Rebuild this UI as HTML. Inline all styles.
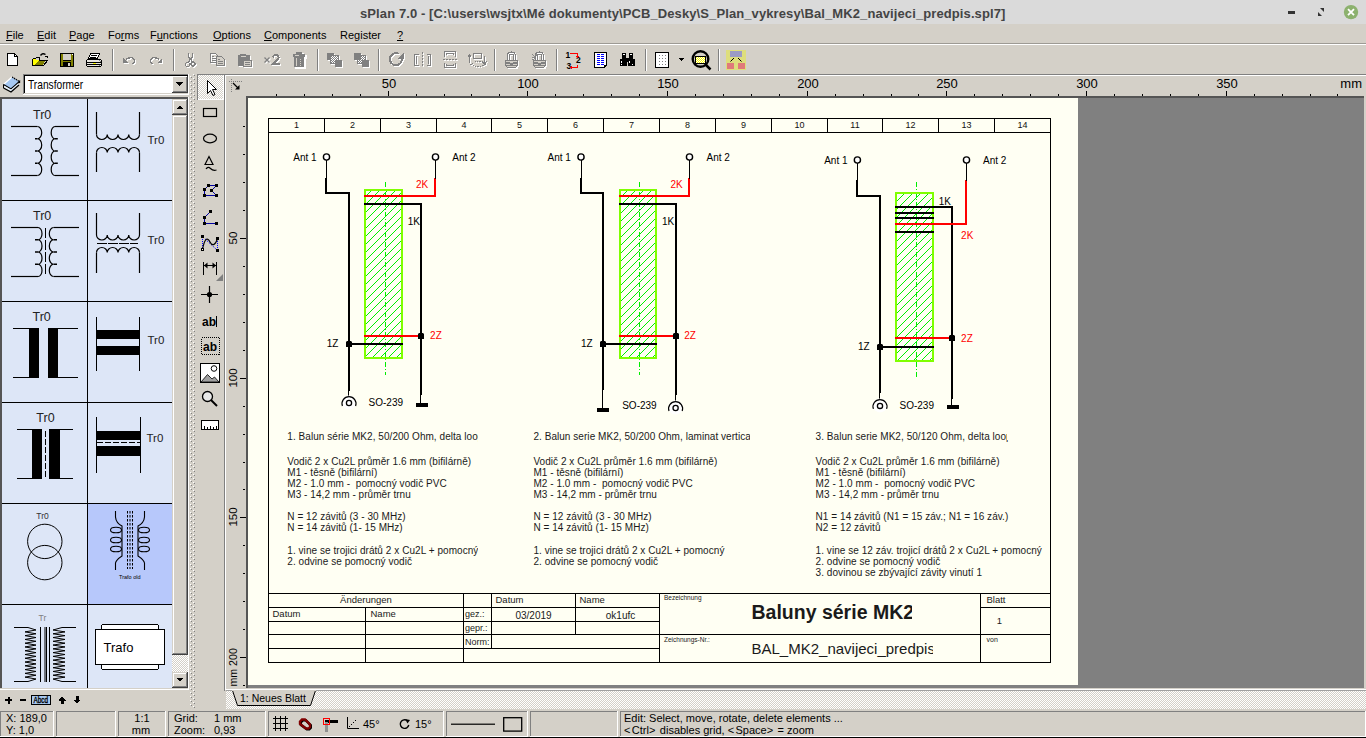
<!DOCTYPE html>
<html><head><meta charset="utf-8">
<style>
*{margin:0;padding:0;box-sizing:border-box}
html,body{width:1366px;height:738px;overflow:hidden;background:#d4d0c8;font-family:"Liberation Sans",sans-serif;position:relative}
.a{position:absolute}
#title{left:0;top:0;width:1366px;height:24px;background:#dadada}
#title .t{left:360px;top:5.5px;font-size:13px;font-weight:bold;color:#444;letter-spacing:0.1px;white-space:pre}
#menu{left:0;top:24px;width:1366px;height:20px;background:#d4d0c8;border-bottom:1px solid #9d9a94}
#menu span{position:absolute;top:5px;font-size:11px;color:#000;white-space:pre}
#menu u{text-decoration:underline;text-underline-offset:1px;text-decoration-thickness:1px}
svg text{white-space:pre}
.dither{background-color:#fff;background-image:linear-gradient(45deg,#d4d0c8 25%,transparent 25%,transparent 75%,#d4d0c8 75%),linear-gradient(45deg,#d4d0c8 25%,transparent 25%,transparent 75%,#d4d0c8 75%);background-size:2px 2px;background-position:0 0,1px 1px}
.sunk{border-top:1px solid #808080;border-left:1px solid #808080;border-bottom:1px solid #fff;border-right:1px solid #fff}
.raised{border-top:1px solid #fff;border-left:1px solid #fff;border-bottom:1px solid #404040;border-right:1px solid #404040;background:#d4d0c8}
</style></head>
<body>
<div id="title" class="a"><div class="t a">sPlan 7.0 - [C:\users\wsjtx\Mé dokumenty\PCB_Desky\S_Plan_vykresy\Bal_MK2_navijeci_predpis.spl7]</div>
<div class="a" style="left:1288px;top:11px;width:7px;height:3px;background:#333"></div>
<svg class="a" style="left:1316px;top:7px" width="10" height="10"><path d="M2 5V9H6Z M4 1H8V5Z" fill="#333"/></svg>
<svg class="a" style="left:1342px;top:4px" width="18" height="18"><circle cx="9" cy="8.1" r="7.2" fill="#8cb16e"/><path d="M6 5.1L12 11.1M12 5.1L6 11.1" stroke="#fff" stroke-width="1.8"/></svg>
</div>
<div id="menu" class="a">
<span style="left:6px"><u>F</u>ile</span>
<span style="left:37px"><u>E</u>dit</span>
<span style="left:69px"><u>P</u>age</span>
<span style="left:108px">Fo<u>r</u>ms</span>
<span style="left:150px">F<u>u</u>nctions</span>
<span style="left:213px"><u>O</u>ptions</span>
<span style="left:264px"><u>C</u>omponents</span>
<span style="left:340px">Re<u>g</u>ister</span>
<span style="left:397px"><u>?</u></span>
</div>
<div class="a" style="left:0;top:44px;width:1366px;height:1px;background:#fff"></div>
<!-- canvas frame -->
<div class="a" style="left:224px;top:74px;width:1142px;height:617px;border-left:1px solid #808080;border-top:1px solid #808080;background:#d4d0c8">
  <div class="a" style="left:0;top:0;width:1141px;height:615px;border-left:1px solid #fff;border-top:1px solid #fff;border-bottom:1px solid #fff"></div>
</div>
<div class="a" style="left:246px;top:96px;width:1118px;height:592px;background:#808080"></div>
<div class="a" style="left:246px;top:96px;width:2px;height:592px;background:#555"></div>
<div class="a" style="left:246px;top:96px;width:1118px;height:2px;background:#555"></div>
<div class="a" style="left:248px;top:98px;width:830px;height:587px;background:#fffff3"></div>
<svg class="a" style="left:0;top:0" width="1366" height="738" viewBox="0 0 1366 738" font-family="Liberation Sans, sans-serif"><defs><clipPath id="cb1"><rect x="280" y="420" width="198" height="170"/></clipPath><clipPath id="cb2"><rect x="525" y="420" width="225" height="170"/></clipPath><clipPath id="cb3"><rect x="810" y="420" width="197" height="20"/><rect x="810" y="440" width="240" height="150"/></clipPath><clipPath id="ct1"><rect x="660" y="594" width="252" height="40"/></clipPath><clipPath id="ct2"><rect x="660" y="635" width="273" height="27"/></clipPath></defs><g fill="none" stroke="#000" stroke-width="1" shape-rendering="crispEdges"><rect x="268.5" y="118.5" width="782" height="544"/><line x1="268" y1="132.5" x2="1051" y2="132.5"/><line x1="324.5" y1="118" x2="324.5" y2="133"/><line x1="380.5" y1="118" x2="380.5" y2="133"/><line x1="436.5" y1="118" x2="436.5" y2="133"/><line x1="491.5" y1="118" x2="491.5" y2="133"/><line x1="547.5" y1="118" x2="547.5" y2="133"/><line x1="603.5" y1="118" x2="603.5" y2="133"/><line x1="659.5" y1="118" x2="659.5" y2="133"/><line x1="715.5" y1="118" x2="715.5" y2="133"/><line x1="771.5" y1="118" x2="771.5" y2="133"/><line x1="827.5" y1="118" x2="827.5" y2="133"/><line x1="882.5" y1="118" x2="882.5" y2="133"/><line x1="938.5" y1="118" x2="938.5" y2="133"/><line x1="994.5" y1="118" x2="994.5" y2="133"/></g><text x="296.5" y="128" font-size="9" fill="#111" text-anchor="middle" font-weight="normal" >1</text><text x="352.5" y="128" font-size="9" fill="#111" text-anchor="middle" font-weight="normal" >2</text><text x="408.5" y="128" font-size="9" fill="#111" text-anchor="middle" font-weight="normal" >3</text><text x="464.0" y="128" font-size="9" fill="#111" text-anchor="middle" font-weight="normal" >4</text><text x="519.5" y="128" font-size="9" fill="#111" text-anchor="middle" font-weight="normal" >5</text><text x="575.5" y="128" font-size="9" fill="#111" text-anchor="middle" font-weight="normal" >6</text><text x="631.5" y="128" font-size="9" fill="#111" text-anchor="middle" font-weight="normal" >7</text><text x="687.5" y="128" font-size="9" fill="#111" text-anchor="middle" font-weight="normal" >8</text><text x="743.5" y="128" font-size="9" fill="#111" text-anchor="middle" font-weight="normal" >9</text><text x="799.5" y="128" font-size="9" fill="#111" text-anchor="middle" font-weight="normal" >10</text><text x="855.0" y="128" font-size="9" fill="#111" text-anchor="middle" font-weight="normal" >11</text><text x="910.5" y="128" font-size="9" fill="#111" text-anchor="middle" font-weight="normal" >12</text><text x="966.5" y="128" font-size="9" fill="#111" text-anchor="middle" font-weight="normal" >13</text><text x="1022.5" y="128" font-size="9" fill="#111" text-anchor="middle" font-weight="normal" >14</text><g fill="none" stroke="#000" stroke-width="1" shape-rendering="crispEdges"><line x1="268" y1="593.5" x2="1051" y2="593.5"/><line x1="268" y1="607.5" x2="660" y2="607.5"/><line x1="268" y1="621.5" x2="660" y2="621.5"/><line x1="268" y1="634.5" x2="1051" y2="634.5"/><line x1="268" y1="648.5" x2="660" y2="648.5"/><line x1="980" y1="607.5" x2="1051" y2="607.5"/><line x1="365.5" y1="607" x2="365.5" y2="663"/><line x1="463.5" y1="593" x2="463.5" y2="663"/><line x1="491.5" y1="593" x2="491.5" y2="649"/><line x1="575.5" y1="593" x2="575.5" y2="635"/><line x1="659.5" y1="593" x2="659.5" y2="663"/><line x1="980.5" y1="593" x2="980.5" y2="663"/></g><text x="366" y="603" font-size="9.5" fill="#1a1a1a" text-anchor="middle" font-weight="normal" >Änderungen</text><text x="272.5" y="617" font-size="9.5" fill="#1a1a1a" text-anchor="start" font-weight="normal" >Datum</text><text x="370.5" y="617" font-size="9.5" fill="#1a1a1a" text-anchor="start" font-weight="normal" >Name</text><text x="465" y="617" font-size="9" fill="#1a1a1a" text-anchor="start" font-weight="normal" >gez.:</text><text x="465" y="631" font-size="9" fill="#1a1a1a" text-anchor="start" font-weight="normal" >gepr.:</text><text x="465" y="645" font-size="9" fill="#1a1a1a" text-anchor="start" font-weight="normal" >Norm:</text><text x="495.5" y="603" font-size="9.5" fill="#1a1a1a" text-anchor="start" font-weight="normal" >Datum</text><text x="579.5" y="603" font-size="9.5" fill="#1a1a1a" text-anchor="start" font-weight="normal" >Name</text><text x="533.5" y="619" font-size="10" fill="#1a1a1a" text-anchor="middle" font-weight="normal" >03/2019</text><text x="620.5" y="619" font-size="10" fill="#1a1a1a" text-anchor="middle" font-weight="normal" >ok1ufc</text><text x="664" y="600" font-size="6.5" fill="#1a1a1a" text-anchor="start" font-weight="normal" >Bezeichnung</text><text x="664" y="641.5" font-size="6.5" fill="#1a1a1a" text-anchor="start" font-weight="normal" >Zeichnungs-Nr.:</text><g clip-path="url(#ct1)"><text x="751.5" y="619" font-size="19.5" fill="#1a1a1a" text-anchor="start" font-weight="bold" >Baluny série MK2</text></g><g clip-path="url(#ct2)"><text x="751.5" y="653.5" font-size="15" fill="#1a1a1a" text-anchor="start" font-weight="normal" >BAL_MK2_navijeci_predpis</text></g><text x="986.5" y="603" font-size="9.5" fill="#1a1a1a" text-anchor="start" font-weight="normal" >Blatt</text><text x="999.5" y="624" font-size="9.5" fill="#1a1a1a" text-anchor="middle" font-weight="normal" >1</text><text x="986.5" y="641.5" font-size="7" fill="#1a1a1a" text-anchor="start" font-weight="normal" >von</text><g clip-path="url(#cb1)" letter-spacing="0.05"><text x="287.3" y="440" font-size="10" fill="#1a1a1a" text-anchor="start" font-weight="normal" >1. Balun série MK2, 50/200 Ohm, delta loop</text><text x="287.3" y="465.1" font-size="10" fill="#1a1a1a" text-anchor="start" font-weight="normal" >Vodič 2 x Cu2L průměr 1.6 mm (bifilárně)</text><text x="287.3" y="476.15" font-size="10" fill="#1a1a1a" text-anchor="start" font-weight="normal" >M1 - těsně (bifilární)</text><text x="287.3" y="487.2" font-size="10" fill="#1a1a1a" text-anchor="start" font-weight="normal" >M2 - 1.0 mm -  pomocný vodič PVC</text><text x="287.3" y="498.25" font-size="10" fill="#1a1a1a" text-anchor="start" font-weight="normal" >M3 - 14,2 mm - průměr trnu</text><text x="287.3" y="520.35" font-size="10" fill="#1a1a1a" text-anchor="start" font-weight="normal" >N = 12 závitů (3 - 30 MHz)</text><text x="287.3" y="531.4" font-size="10" fill="#1a1a1a" text-anchor="start" font-weight="normal" >N = 14 závitů (1- 15 MHz)</text><text x="287.3" y="553.5" font-size="10" fill="#1a1a1a" text-anchor="start" font-weight="normal" >1. vine se trojici drátů 2 x Cu2L + pomocný</text><text x="287.3" y="564.55" font-size="10" fill="#1a1a1a" text-anchor="start" font-weight="normal" >2. odvine se pomocný vodič</text></g><g clip-path="url(#cb2)" letter-spacing="0.05"><text x="533.4" y="440" font-size="10" fill="#1a1a1a" text-anchor="start" font-weight="normal" >2. Balun serie MK2, 50/200 Ohm, laminat vertica</text><text x="533.4" y="465.1" font-size="10" fill="#1a1a1a" text-anchor="start" font-weight="normal" >Vodič 2 x Cu2L průměr 1.6 mm (bifilárně)</text><text x="533.4" y="476.15" font-size="10" fill="#1a1a1a" text-anchor="start" font-weight="normal" >M1 - těsně (bifilární)</text><text x="533.4" y="487.2" font-size="10" fill="#1a1a1a" text-anchor="start" font-weight="normal" >M2 - 1.0 mm -  pomocný vodič PVC</text><text x="533.4" y="498.25" font-size="10" fill="#1a1a1a" text-anchor="start" font-weight="normal" >M3 - 14,2 mm - průměr trnu</text><text x="533.4" y="520.35" font-size="10" fill="#1a1a1a" text-anchor="start" font-weight="normal" >N = 12 závitů (3 - 30 MHz)</text><text x="533.4" y="531.4" font-size="10" fill="#1a1a1a" text-anchor="start" font-weight="normal" >N = 14 závitů (1- 15 MHz)</text><text x="533.4" y="553.5" font-size="10" fill="#1a1a1a" text-anchor="start" font-weight="normal" >1. vine se trojici drátů 2 x Cu2L + pomocný</text><text x="533.4" y="564.55" font-size="10" fill="#1a1a1a" text-anchor="start" font-weight="normal" >2. odvine se pomocný vodič</text></g><g clip-path="url(#cb3)" letter-spacing="0.05"><text x="815.6" y="440" font-size="10" fill="#1a1a1a" text-anchor="start" font-weight="normal" >3. Balun serie MK2, 50/120 Ohm, delta loop</text><text x="815.6" y="465.1" font-size="10" fill="#1a1a1a" text-anchor="start" font-weight="normal" >Vodič 2 x Cu2L průměr 1.6 mm (bifilárně)</text><text x="815.6" y="476.15" font-size="10" fill="#1a1a1a" text-anchor="start" font-weight="normal" >M1 - těsně (bifilární)</text><text x="815.6" y="487.2" font-size="10" fill="#1a1a1a" text-anchor="start" font-weight="normal" >M2 - 1.0 mm -  pomocný vodič PVC</text><text x="815.6" y="498.25" font-size="10" fill="#1a1a1a" text-anchor="start" font-weight="normal" >M3 - 14,2 mm - průměr trnu</text><text x="815.6" y="520.35" font-size="10" fill="#1a1a1a" text-anchor="start" font-weight="normal" >N1 = 14 závitů (N1 = 15 záv.; N1 = 16 záv.)</text><text x="815.6" y="531.4" font-size="10" fill="#1a1a1a" text-anchor="start" font-weight="normal" >N2 = 12 závitů</text><text x="815.6" y="553.5" font-size="10" fill="#1a1a1a" text-anchor="start" font-weight="normal" >1. vine se 12 záv. trojicí drátů 2 x Cu2L + pomocný</text><text x="815.6" y="564.55" font-size="10" fill="#1a1a1a" text-anchor="start" font-weight="normal" >2. odvine se pomocný vodič</text><text x="815.6" y="575.6" font-size="10" fill="#1a1a1a" text-anchor="start" font-weight="normal" >3. dovinou se zbývající závity vinutí 1</text></g><path d="M366 196L371 191M366 204L379 191M366 212L387 191M366 220L395 191M366 228L401 193M366 236L401 201M366 244L401 209M366 252L401 217M366 260L401 225M366 268L401 233M366 276L401 241M366 284L401 249M366 292L401 257M366 300L401 265M366 308L401 273M366 316L401 281M366 324L401 289M366 332L401 297M366 340L401 305M366 348L401 313M366 356L401 321M373 357L401 329M381 357L401 337M389 357L401 345M397 357L401 353" stroke="#00ee00" stroke-width="1" fill="none" shape-rendering="crispEdges"/><line x1="385.5" y1="182" x2="385.5" y2="375" stroke="#00ee00" stroke-width="1" stroke-dasharray="5,2,1,2" shape-rendering="crispEdges"/><rect x="365" y="190" width="37" height="168" fill="none" stroke="#80ff00" stroke-width="2" shape-rendering="crispEdges"/><g fill="none" stroke-width="2" shape-rendering="crispEdges" stroke-linecap="square"><path d="M326 179V193H349V390" stroke="#000"/><path d="M365 204H421V394" stroke="#000"/><path d="M365 196H435V179" stroke="#ff0000"/><path d="M365 336H421" stroke="#ff0000"/><path d="M349 344H402" stroke="#000"/></g><g fill="none" stroke-width="1" stroke="#000" shape-rendering="crispEdges"><path d="M326.5 160V179"/><path d="M435.5 160V179"/><path d="M348.5 390V396"/><path d="M420.5 394V403"/></g><path d="M347 341H351L352 342V347H346V342Z" fill="#000"/><path d="M419 333H423L424 334V339H418V334Z" fill="#000"/><circle cx="326.5" cy="157" r="3.1" fill="#fff" stroke="#000" stroke-width="1.4"/><circle cx="435.5" cy="157" r="3.1" fill="#fff" stroke="#000" stroke-width="1.4"/><rect x="416" y="403" width="12" height="4" fill="#000"/><circle cx="349" cy="402.5" r="7" fill="#fff" stroke="none"/><path d="M342.4 406.0A7 7 0 1 1 355.6 406.0" fill="none" stroke="#000" stroke-width="1.2"/><circle cx="349" cy="403.0" r="2.6" fill="none" stroke="#000" stroke-width="1.3"/><text x="293.3" y="160.5" font-size="10" fill="#000" text-anchor="start" font-weight="normal" >Ant 1</text><text x="452.3" y="160.5" font-size="10" fill="#000" text-anchor="start" font-weight="normal" >Ant 2</text><text x="416" y="188" font-size="10" fill="#ff0000" text-anchor="start" font-weight="normal" >2K</text><text x="407.8" y="225" font-size="10" fill="#000" text-anchor="start" font-weight="normal" >1K</text><text x="326.8" y="347.2" font-size="10" fill="#000" text-anchor="start" font-weight="normal" >1Z</text><text x="430.1" y="339" font-size="10" fill="#ff0000" text-anchor="start" font-weight="normal" >2Z</text><text x="368.6" y="406.2" font-size="10" fill="#000" text-anchor="start" font-weight="normal" >SO-239</text><path d="M621 197L627 191M621 205L635 191M621 213L643 191M621 221L651 191M621 229L655 195M621 237L655 203M621 245L655 211M621 253L655 219M621 261L655 227M621 269L655 235M621 277L655 243M621 285L655 251M621 293L655 259M621 301L655 267M621 309L655 275M621 317L655 283M621 325L655 291M621 333L655 299M621 341L655 307M621 349L655 315M621 357L655 323M629 357L655 331M637 357L655 339M645 357L655 347M653 357L655 355" stroke="#00ee00" stroke-width="1" fill="none" shape-rendering="crispEdges"/><line x1="639.5" y1="182" x2="639.5" y2="375" stroke="#00ee00" stroke-width="1" stroke-dasharray="5,2,1,2" shape-rendering="crispEdges"/><rect x="620" y="190" width="36" height="168" fill="none" stroke="#80ff00" stroke-width="2" shape-rendering="crispEdges"/><g fill="none" stroke-width="2" shape-rendering="crispEdges" stroke-linecap="square"><path d="M581 179V193H603V389" stroke="#000"/><path d="M620 204H676V394" stroke="#000"/><path d="M620 196H689V179" stroke="#ff0000"/><path d="M620 336H676" stroke="#ff0000"/><path d="M603 344H656" stroke="#000"/></g><g fill="none" stroke-width="1" stroke="#000" shape-rendering="crispEdges"><path d="M581.5 160V179"/><path d="M689.5 160V179"/><path d="M602.5 389V408"/><path d="M675.5 394V401"/></g><path d="M601 341H605L606 342V347H600V342Z" fill="#000"/><path d="M674 333H678L679 334V339H673V334Z" fill="#000"/><circle cx="581" cy="157" r="3.1" fill="#fff" stroke="#000" stroke-width="1.4"/><circle cx="689.5" cy="157" r="3.1" fill="#fff" stroke="#000" stroke-width="1.4"/><rect x="597" y="408" width="12" height="4" fill="#000"/><circle cx="675.6" cy="407.5" r="7" fill="#fff" stroke="none"/><path d="M669.0 411.0A7 7 0 1 1 682.2 411.0" fill="none" stroke="#000" stroke-width="1.2"/><circle cx="675.6" cy="408.0" r="2.6" fill="none" stroke="#000" stroke-width="1.3"/><text x="547.5" y="160.5" font-size="10" fill="#000" text-anchor="start" font-weight="normal" >Ant 1</text><text x="706.5" y="160.5" font-size="10" fill="#000" text-anchor="start" font-weight="normal" >Ant 2</text><text x="670.4" y="188" font-size="10" fill="#ff0000" text-anchor="start" font-weight="normal" >2K</text><text x="662" y="225" font-size="10" fill="#000" text-anchor="start" font-weight="normal" >1K</text><text x="581" y="347.2" font-size="10" fill="#000" text-anchor="start" font-weight="normal" >1Z</text><text x="684.3" y="339" font-size="10" fill="#ff0000" text-anchor="start" font-weight="normal" >2Z</text><text x="622.2" y="409" font-size="10" fill="#000" text-anchor="start" font-weight="normal" >SO-239</text><path d="M897 201L904 194M897 209L912 194M897 217L920 194M897 225L928 194M897 233L932 198M897 241L932 206M897 249L932 214M897 257L932 222M897 265L932 230M897 273L932 238M897 281L932 246M897 289L932 254M897 297L932 262M897 305L932 270M897 313L932 278M897 321L932 286M897 329L932 294M897 337L932 302M897 345L932 310M897 353L932 318M898 360L932 326M906 360L932 334M914 360L932 342M922 360L932 350M930 360L932 358" stroke="#00ee00" stroke-width="1" fill="none" shape-rendering="crispEdges"/><line x1="916.5" y1="182" x2="916.5" y2="377" stroke="#00ee00" stroke-width="1" stroke-dasharray="5,2,1,2" shape-rendering="crispEdges"/><rect x="896" y="193" width="37" height="168" fill="none" stroke="#80ff00" stroke-width="2" shape-rendering="crispEdges"/><g fill="none" stroke-width="2" shape-rendering="crispEdges" stroke-linecap="square"><path d="M857 181V196H880V392" stroke="#000"/><path d="M896 207H952V398" stroke="#000"/><path d="M896 213H933" stroke="#000"/><path d="M896 218H933" stroke="#000"/><path d="M896 232H933" stroke="#000"/><path d="M896 224H966V181" stroke="#ff0000"/><path d="M896 338H952" stroke="#ff0000"/><path d="M880 347H933" stroke="#000"/></g><g fill="none" stroke-width="1" stroke="#000" shape-rendering="crispEdges"><path d="M857.5 163V181"/><path d="M966.5 163V181"/><path d="M879.5 392V399"/><path d="M951.5 398V405"/></g><path d="M878 344H882L883 345V350H877V345Z" fill="#000"/><path d="M950 335H954L955 336V341H949V336Z" fill="#000"/><circle cx="857.4" cy="160" r="3.1" fill="#fff" stroke="#000" stroke-width="1.4"/><circle cx="966.5" cy="160" r="3.1" fill="#fff" stroke="#000" stroke-width="1.4"/><rect x="947" y="405" width="12" height="4" fill="#000"/><circle cx="880" cy="405.4" r="7" fill="#fff" stroke="none"/><path d="M873.4 408.9A7 7 0 1 1 886.6 408.9" fill="none" stroke="#000" stroke-width="1.2"/><circle cx="880" cy="405.9" r="2.6" fill="none" stroke="#000" stroke-width="1.3"/><text x="824.2" y="163.5" font-size="10" fill="#000" text-anchor="start" font-weight="normal" >Ant 1</text><text x="983" y="163.5" font-size="10" fill="#000" text-anchor="start" font-weight="normal" >Ant 2</text><text x="961.1" y="239" font-size="10" fill="#ff0000" text-anchor="start" font-weight="normal" >2K</text><text x="938.8" y="205" font-size="10" fill="#000" text-anchor="start" font-weight="normal" >1K</text><text x="857.9" y="350" font-size="10" fill="#000" text-anchor="start" font-weight="normal" >1Z</text><text x="961.1" y="342" font-size="10" fill="#ff0000" text-anchor="start" font-weight="normal" >2Z</text><text x="899.5" y="409" font-size="10" fill="#000" text-anchor="start" font-weight="normal" >SO-239</text></svg><svg class="a" style="left:0;top:0" width="760" height="74" viewBox="0 0 760 74" shape-rendering="crispEdges"><path d="M7.5 53.5H14.5L17.5 56.5V65.5H7.5Z" fill="#fff" stroke="#000"/><path d="M14.5 53.5V56.5H17.5" fill="none" stroke="#000"/><path d="M32.5 58.5H35.5L36.5 57.5H39.5V60.5H44.5V61.5" fill="none" stroke="#000"/><path d="M32.5 58.5V65.5H43.5L47.5 60.5H38.5L33.5 65.5" fill="none" stroke="#000"/><path d="M33 59H36V60H38V60H39V61L34 65H33Z" fill="#ffff00"/><path d="M35 64L38.5 61H45.5L42.5 65H35Z" fill="#808000"/><path d="M40.5 55.5Q42.5 52.5 45.5 54.5" fill="none" stroke="#000" stroke-width="1.4" shape-rendering="auto"/><path d="M44 55.5H47.5V58Z" fill="#000"/><rect x="60" y="53" width="14" height="14" fill="#000"/><rect x="61" y="54" width="12" height="12" fill="#808000"/><rect x="63" y="54" width="8" height="6" fill="#d4d0c8"/><rect x="63" y="60" width="8" height="1" fill="#000"/><rect x="63" y="62" width="8" height="5" fill="#000"/><rect x="68" y="63" width="2" height="3" fill="#d4d0c8"/><rect x="72" y="54" width="1" height="1" fill="#fff"/><path d="M90.5 53.5H99.5L97.5 58.5H88.5Z" fill="#fff" stroke="#000"/><rect x="91" y="55" width="6" height="1" fill="#000"/><rect x="90" y="57" width="6" height="1" fill="#000"/><path d="M87.5 59.5H100.5L101.5 60.5V65.5L100.5 66.5H87.5L86.5 65.5V60.5Z" fill="#e8e6e0" stroke="#000"/><rect x="87" y="62" width="14" height="1" fill="#000"/><rect x="87" y="64" width="14" height="1" fill="#000"/><rect x="93" y="63" width="3" height="1" fill="#ffff00"/><rect x="99" y="60" width="1" height="1" fill="#808080"/><rect x="100" y="61" width="1" height="1" fill="#808080"/><rect x="99" y="65" width="1" height="1" fill="#808080"/><rect x="112" y="49" width="1" height="22" fill="#808080"/><rect x="113" y="49" width="1" height="22" fill="#fff"/><g transform="translate(1,1)" stroke="#fff" fill="none" opacity="1"><path d="M123 58V63H128Z" fill="#fff" stroke="none"/><path d="M126 59.5Q128.5 57.5 131 57.5Q134.5 58 134.5 61Q134.5 63 132.5 64" fill="none" stroke="#fff" stroke-width="1.5"/></g><g><path d="M123 58V63H128Z" fill="#808080" stroke="none"/><path d="M126 59.5Q128.5 57.5 131 57.5Q134.5 58 134.5 61Q134.5 63 132.5 64" fill="none" stroke="#808080" stroke-width="1.5"/></g><g transform="translate(1,1)" stroke="#fff" fill="none" opacity="1"><path d="M162 58V63H157Z" fill="#fff" stroke="none"/><path d="M159 59.5Q156.5 57.5 154 57.5Q150.5 58 150.5 61Q150.5 63 152.5 64" fill="none" stroke="#fff" stroke-width="1.5"/></g><g><path d="M162 58V63H157Z" fill="#808080" stroke="none"/><path d="M159 59.5Q156.5 57.5 154 57.5Q150.5 58 150.5 61Q150.5 63 152.5 64" fill="none" stroke="#808080" stroke-width="1.5"/></g><rect x="173" y="49" width="1" height="22" fill="#808080"/><rect x="174" y="49" width="1" height="22" fill="#fff"/><g transform="translate(1,1)" stroke="#fff" fill="none" opacity="1"><path d="M188.5 53V57L190.5 59L192.5 57V53M190.5 59L188.5 62M190.5 59L192.5 62" fill="none" stroke="#fff" stroke-width="1.2"/><circle cx="187.5" cy="64.5" r="2" fill="none" stroke="#fff" stroke-width="1.2"/><circle cx="193" cy="64" r="2" fill="none" stroke="#fff" stroke-width="1.2"/></g><g><path d="M188.5 53V57L190.5 59L192.5 57V53M190.5 59L188.5 62M190.5 59L192.5 62" fill="none" stroke="#808080" stroke-width="1.2"/><circle cx="187.5" cy="64.5" r="2" fill="none" stroke="#808080" stroke-width="1.2"/><circle cx="193" cy="64" r="2" fill="none" stroke="#808080" stroke-width="1.2"/></g><g transform="translate(1,1)" stroke="#fff" fill="none" opacity="1"><path d="M210.5 53.5H215.5L217.5 55.5V62.5H210.5Z" fill="none" stroke="#fff"/><rect x="212" y="56" width="2" height="1" fill="#fff"/><rect x="212" y="58" width="4" height="1" fill="#fff"/><rect x="212" y="60" width="4" height="1" fill="#fff"/><path d="M216.5 56.5H221.5L224.5 59.5V65.5H216.5Z" fill="#d4d0c8" stroke="#fff"/><rect x="218" y="59" width="2" height="1" fill="#fff"/><rect x="218" y="61" width="5" height="1" fill="#fff"/><rect x="218" y="63" width="5" height="1" fill="#fff"/></g><g><path d="M210.5 53.5H215.5L217.5 55.5V62.5H210.5Z" fill="none" stroke="#808080"/><rect x="212" y="56" width="2" height="1" fill="#808080"/><rect x="212" y="58" width="4" height="1" fill="#808080"/><rect x="212" y="60" width="4" height="1" fill="#808080"/><path d="M216.5 56.5H221.5L224.5 59.5V65.5H216.5Z" fill="#d4d0c8" stroke="#808080"/><rect x="218" y="59" width="2" height="1" fill="#808080"/><rect x="218" y="61" width="5" height="1" fill="#808080"/><rect x="218" y="63" width="5" height="1" fill="#808080"/></g><g transform="translate(1,1)" stroke="#fff" fill="none" opacity="1"><path d="M238 55H240V53.5H246V55H249.5V61H243V66H238Z" fill="#fff" stroke="none"/><rect x="241" y="56" width="5" height="1" fill="#d4d0c8"/><rect x="243.5" y="60.5" width="8" height="5.5" fill="#d4d0c8" stroke="#fff"/><rect x="245" y="62" width="5" height="1" fill="#fff"/><rect x="245" y="64" width="5" height="1" fill="#fff"/></g><g><path d="M238 55H240V53.5H246V55H249.5V61H243V66H238Z" fill="#808080" stroke="none"/><rect x="241" y="56" width="5" height="1" fill="#d4d0c8"/><rect x="243.5" y="60.5" width="8" height="5.5" fill="#d4d0c8" stroke="#808080"/><rect x="245" y="62" width="5" height="1" fill="#808080"/><rect x="245" y="64" width="5" height="1" fill="#808080"/></g><g transform="translate(1,1)" stroke="#fff" fill="none" opacity="1"><path d="M264.5 57.5L269.5 62.5M269.5 57.5L264.5 62.5" stroke="#fff" stroke-width="1.3" fill="none" shape-rendering="auto"/><path d="M273 57.5Q273.2 55 275.8 55Q278.6 55 278.6 57.5Q278.6 59.3 276.2 61.2L273 63.8H279.5" stroke="#fff" stroke-width="2" fill="none"/></g><g><path d="M264.5 57.5L269.5 62.5M269.5 57.5L264.5 62.5" stroke="#808080" stroke-width="1.3" fill="none" shape-rendering="auto"/><path d="M273 57.5Q273.2 55 275.8 55Q278.6 55 278.6 57.5Q278.6 59.3 276.2 61.2L273 63.8H279.5" stroke="#808080" stroke-width="2" fill="none"/></g><g transform="translate(1,1)" stroke="#fff" fill="none" opacity="1"><rect x="296" y="52" width="6" height="2" fill="#fff"/><rect x="293" y="54" width="12" height="3" fill="#fff"/><rect x="294" y="57" width="10" height="10" fill="#fff"/><rect x="295" y="55" width="4" height="1" fill="#d4d0c8"/><rect x="296" y="58" width="1" height="8" fill="#d4d0c8"/><rect x="300" y="59" width="1" height="1" fill="#d4d0c8"/><rect x="300" y="61" width="1" height="1" fill="#d4d0c8"/><rect x="300" y="63" width="1" height="1" fill="#d4d0c8"/><rect x="300" y="65" width="1" height="1" fill="#d4d0c8"/></g><g><rect x="296" y="52" width="6" height="2" fill="#808080"/><rect x="293" y="54" width="12" height="3" fill="#808080"/><rect x="294" y="57" width="10" height="10" fill="#808080"/><rect x="295" y="55" width="4" height="1" fill="#d4d0c8"/><rect x="296" y="58" width="1" height="8" fill="#d4d0c8"/><rect x="300" y="59" width="1" height="1" fill="#d4d0c8"/><rect x="300" y="61" width="1" height="1" fill="#d4d0c8"/><rect x="300" y="63" width="1" height="1" fill="#d4d0c8"/><rect x="300" y="65" width="1" height="1" fill="#d4d0c8"/></g><rect x="317" y="49" width="1" height="22" fill="#808080"/><rect x="318" y="49" width="1" height="22" fill="#fff"/><defs><pattern id="tbd" width="2" height="2" patternUnits="userSpaceOnUse"><rect width="2" height="2" fill="#808080"/><rect width="1" height="1" fill="#fff"/><rect x="1" y="1" width="1" height="1" fill="#fff"/></pattern></defs><g fill="#fff"><rect x="328" y="54" width="7" height="7"/><rect x="331" y="56" width="9" height="9"/><rect x="336" y="61" width="7" height="7"/></g><rect x="327" y="53" width="7" height="7" fill="#808080"/><rect x="330" y="55" width="9" height="9" fill="#808080"/><rect x="331" y="56" width="7" height="7" fill="url(#tbd)"/><rect x="335" y="60" width="7" height="7" fill="#808080"/><g fill="#fff"><rect x="355" y="54" width="7" height="7"/><rect x="358" y="56" width="9" height="9"/><rect x="363" y="61" width="7" height="7"/></g><rect x="354" y="53" width="7" height="7" fill="#808080"/><rect x="357" y="55" width="9" height="9" fill="#808080"/><rect x="358" y="56" width="7" height="7" fill="url(#tbd)"/><rect x="362" y="60" width="7" height="7" fill="#808080"/><rect x="358" y="56" width="3" height="4" fill="#808080"/><rect x="378" y="49" width="1" height="22" fill="#808080"/><rect x="379" y="49" width="1" height="22" fill="#fff"/><g transform="translate(1,1)" stroke="#fff" fill="none" opacity="1"><path d="M398.5 53.8A6 6 0 1 0 401.8 58.5" fill="none" stroke="#fff" stroke-width="2"/><path d="M403.5 53V58.5H398Z" fill="#fff" stroke="none"/></g><g><path d="M398.5 53.8A6 6 0 1 0 401.8 58.5" fill="none" stroke="#808080" stroke-width="2"/><path d="M403.5 53V58.5H398Z" fill="#808080" stroke="none"/></g><g transform="translate(1,1)" stroke="#fff" fill="none" opacity="1"><path d="M418.5 54.5H414.5V65.5H418.5M417 56.5H416.5V63.5H417" fill="none" stroke="#fff" stroke-width="1.3"/><path d="M426.5 54.5H430.5V65.5H426.5M428 56.5H428.5V63.5H428" fill="none" stroke="#fff" stroke-width="1.3"/><line x1="422.5" y1="52" x2="422.5" y2="67" stroke="#fff" stroke-dasharray="2,1"/></g><g><path d="M418.5 54.5H414.5V65.5H418.5M417 56.5H416.5V63.5H417" fill="none" stroke="#808080" stroke-width="1.3"/><path d="M426.5 54.5H430.5V65.5H426.5M428 56.5H428.5V63.5H428" fill="none" stroke="#808080" stroke-width="1.3"/><line x1="422.5" y1="52" x2="422.5" y2="67" stroke="#808080" stroke-dasharray="2,1"/></g><g transform="translate(1,1)" stroke="#fff" fill="none" opacity="1"><path d="M444.5 56.5V51.5H455.5V56.5M446.5 55V53.5H453.5V55" fill="none" stroke="#fff" stroke-width="1.3"/><path d="M444.5 62.5V67.5H455.5V62.5M446.5 64V65.5H453.5V64" fill="none" stroke="#fff" stroke-width="1.3"/><line x1="443" y1="59.5" x2="458" y2="59.5" stroke="#fff" stroke-dasharray="2,1"/></g><g><path d="M444.5 56.5V51.5H455.5V56.5M446.5 55V53.5H453.5V55" fill="none" stroke="#808080" stroke-width="1.3"/><path d="M444.5 62.5V67.5H455.5V62.5M446.5 64V65.5H453.5V64" fill="none" stroke="#808080" stroke-width="1.3"/><line x1="443" y1="59.5" x2="458" y2="59.5" stroke="#808080" stroke-dasharray="2,1"/></g><g transform="translate(1,1)" stroke="#fff" fill="none" opacity="1"><path d="M469.5 55.5V63M467.5 57.5L469.5 55L471.5 57.5" fill="none" stroke="#fff" stroke-width="1.2"/><rect x="473.5" y="53.5" width="8" height="5" fill="none" stroke="#fff" stroke-width="1.2"/><path d="M470 64.5L476 61.5H481L486 64L479 67Z" fill="none" stroke="#fff" stroke-dasharray="1.5,1"/><path d="M484.5 56V64M482.5 61.5L484.5 64L486.5 61.5" fill="none" stroke="#fff" stroke-width="1.2"/></g><g><path d="M469.5 55.5V63M467.5 57.5L469.5 55L471.5 57.5" fill="none" stroke="#808080" stroke-width="1.2"/><rect x="473.5" y="53.5" width="8" height="5" fill="none" stroke="#808080" stroke-width="1.2"/><path d="M470 64.5L476 61.5H481L486 64L479 67Z" fill="none" stroke="#808080" stroke-dasharray="1.5,1"/><path d="M484.5 56V64M482.5 61.5L484.5 64L486.5 61.5" fill="none" stroke="#808080" stroke-width="1.2"/></g><rect x="494" y="49" width="1" height="22" fill="#808080"/><rect x="495" y="49" width="1" height="22" fill="#fff"/><g transform="translate(1,1)" stroke="#fff" fill="none" opacity="1"><path d="M507.5 60V55.5A4 3.5 0 0 1 515.5 55.5V60" fill="none" stroke="#fff" stroke-width="1.3"/><path d="M509.5 60V56A2 2 0 0 1 513.5 56V60" fill="none" stroke="#fff" stroke-width="1"/><path d="M505 60H518V65L516 68H507L505 65Z" fill="#fff" stroke="none"/><rect x="506" y="61" width="11" height="1" fill="#d4d0c8"/><rect x="506" y="64" width="4" height="1" fill="#d4d0c8"/><rect x="513" y="64" width="4" height="1" fill="#d4d0c8"/><rect x="507" y="66" width="9" height="1" fill="#d4d0c8"/><rect x="510" y="62" width="3" height="1" fill="#d4d0c8"/></g><g><path d="M507.5 60V55.5A4 3.5 0 0 1 515.5 55.5V60" fill="none" stroke="#808080" stroke-width="1.3"/><path d="M509.5 60V56A2 2 0 0 1 513.5 56V60" fill="none" stroke="#808080" stroke-width="1"/><path d="M505 60H518V65L516 68H507L505 65Z" fill="#808080" stroke="none"/><rect x="506" y="61" width="11" height="1" fill="#d4d0c8"/><rect x="506" y="64" width="4" height="1" fill="#d4d0c8"/><rect x="513" y="64" width="4" height="1" fill="#d4d0c8"/><rect x="507" y="66" width="9" height="1" fill="#d4d0c8"/><rect x="510" y="62" width="3" height="1" fill="#d4d0c8"/></g><g transform="translate(1,1)" stroke="#fff" fill="none" opacity="1"><path d="M535.5 60V55.5A4 3.5 0 0 1 543.5 55.5V60" fill="none" stroke="#fff" stroke-width="1.3"/><path d="M537.5 60V56A2 2 0 0 1 541.5 56V60" fill="none" stroke="#fff" stroke-width="1"/><path d="M533 60H546V65L544 68H535L533 65Z" fill="#fff" stroke="none"/><rect x="534" y="61" width="11" height="1" fill="#d4d0c8"/><rect x="534" y="64" width="4" height="1" fill="#d4d0c8"/><rect x="541" y="64" width="4" height="1" fill="#d4d0c8"/><rect x="535" y="66" width="9" height="1" fill="#d4d0c8"/><rect x="538" y="62" width="3" height="1" fill="#d4d0c8"/><path d="M532 54L535 57M532 57.5H535M532 60L535 58M536 52V56" fill="none" stroke="#fff" stroke-width="0.9"/></g><g><path d="M535.5 60V55.5A4 3.5 0 0 1 543.5 55.5V60" fill="none" stroke="#808080" stroke-width="1.3"/><path d="M537.5 60V56A2 2 0 0 1 541.5 56V60" fill="none" stroke="#808080" stroke-width="1"/><path d="M533 60H546V65L544 68H535L533 65Z" fill="#808080" stroke="none"/><rect x="534" y="61" width="11" height="1" fill="#d4d0c8"/><rect x="534" y="64" width="4" height="1" fill="#d4d0c8"/><rect x="541" y="64" width="4" height="1" fill="#d4d0c8"/><rect x="535" y="66" width="9" height="1" fill="#d4d0c8"/><rect x="538" y="62" width="3" height="1" fill="#d4d0c8"/><path d="M532 54L535 57M532 57.5H535M532 60L535 58M536 52V56" fill="none" stroke="#808080" stroke-width="0.9"/></g><rect x="556" y="49" width="1" height="22" fill="#808080"/><rect x="557" y="49" width="1" height="22" fill="#fff"/><text x="565.5" y="58" font-size="8.5" font-weight="bold" font-family="Liberation Sans" fill="#000">1</text><text x="576" y="62.5" font-size="8.5" font-weight="bold" font-family="Liberation Sans" fill="#000">2</text><text x="566.5" y="69" font-size="8.5" font-weight="bold" font-family="Liberation Sans" fill="#000">3</text><path d="M570 53.5H577.5V57M577.5 65V67.5H571" fill="none" stroke="#f00"/><path d="M576 56H579L577.5 58Z M572 66V69L570 67.5Z" fill="#f00"/><path d="M594.5 52.5H606.5V65.5L604.5 67.5H594.5Z" fill="#fff" stroke="#000"/><path d="M604.5 67.5V65.5H606.5" fill="none" stroke="#000"/><rect x="597" y="54" width="3" height="1" fill="#0000ff"/><rect x="601" y="54" width="3" height="1" fill="#0000ff"/><rect x="597" y="56" width="3" height="1" fill="#0000ff"/><rect x="601" y="56" width="3" height="1" fill="#0000ff"/><rect x="597" y="58" width="3" height="1" fill="#0000ff"/><rect x="601" y="58" width="3" height="1" fill="#0000ff"/><rect x="597" y="60" width="3" height="1" fill="#0000ff"/><rect x="601" y="60" width="3" height="1" fill="#0000ff"/><rect x="597" y="62" width="3" height="1" fill="#0000ff"/><rect x="601" y="62" width="3" height="1" fill="#0000ff"/><rect x="597" y="64" width="3" height="1" fill="#0000ff"/><rect x="601" y="64" width="3" height="1" fill="#0000ff"/><path d="M620 59H627V66H620Z M628 59H635V66H628Z M622 53H626V59H622Z M629 53H633V59H629Z M626 58H629V62H626Z" fill="#000"/><rect x="623" y="54" width="2" height="1" fill="#fff"/><rect x="630" y="54" width="2" height="1" fill="#fff"/><rect x="621" y="61" width="1" height="2" fill="#fff"/><rect x="629" y="61" width="1" height="2" fill="#fff"/><rect x="621" y="64" width="1" height="1" fill="#fff"/><rect x="632" y="64" width="1" height="1" fill="#fff"/><rect x="645" y="49" width="1" height="22" fill="#808080"/><rect x="646" y="49" width="1" height="22" fill="#fff"/><rect x="655.5" y="52.5" width="13" height="15" fill="#fff" stroke="#000"/><rect x="659" y="55" width="1" height="1" fill="#808080"/><rect x="662" y="55" width="1" height="1" fill="#808080"/><rect x="665" y="55" width="1" height="1" fill="#808080"/><rect x="659" y="58" width="1" height="1" fill="#808080"/><rect x="662" y="58" width="1" height="1" fill="#808080"/><rect x="665" y="58" width="1" height="1" fill="#808080"/><rect x="659" y="61" width="1" height="1" fill="#808080"/><rect x="662" y="61" width="1" height="1" fill="#808080"/><rect x="665" y="61" width="1" height="1" fill="#808080"/><rect x="659" y="64" width="1" height="1" fill="#808080"/><rect x="662" y="64" width="1" height="1" fill="#808080"/><rect x="665" y="64" width="1" height="1" fill="#808080"/><path d="M678.5 58H684.5L681.5 61Z" fill="#000"/><defs><pattern id="ydith" width="2" height="2" patternUnits="userSpaceOnUse"><rect width="2" height="2" fill="#ffff00"/><rect width="1" height="1" fill="#fff"/><rect x="1" y="1" width="1" height="1" fill="#fff"/></pattern></defs><circle cx="700.5" cy="59" r="7.8" fill="none" stroke="#000" stroke-width="2.4" shape-rendering="auto"/><rect x="695.5" y="56.5" width="10" height="7" fill="url(#ydith)" stroke="#000" stroke-width="1.2"/><path d="M706 65L710.5 69.5" stroke="#000" stroke-width="2.5" shape-rendering="auto"/><rect x="718" y="49" width="1" height="22" fill="#808080"/><rect x="719" y="49" width="1" height="22" fill="#fff"/><rect x="726" y="50" width="20" height="20" fill="#dede7c"/><rect x="730" y="51" width="12" height="6" fill="#9b9bc4"/><rect x="727" y="63" width="7" height="6" fill="#e07a7a"/><rect x="738" y="63" width="7" height="6" fill="#e07a7a"/><path d="M734 58L730.5 61.5M738 58L741.5 61.5" stroke="#000" fill="none" shape-rendering="auto"/></svg><svg class="a" style="left:0;top:0" width="224" height="709" viewBox="0 0 224 709"><path d="M3.5 84.5L12 77L19.5 81.5L11 89Z" fill="#a6c8f2"/><path d="M4 84L12 77" stroke="#fff" stroke-width="1.2" fill="none"/><path d="M12 77L19.5 81.5" stroke="#000" stroke-width="1.2" fill="none" stroke-dasharray="1.5,0.7"/><path d="M3.5 84.5L11 89L19.5 81.5V83" stroke="#000" stroke-width="1.3" fill="none"/><path d="M4 86.5L11 90.5L18.5 84" stroke="#e8f4ff" stroke-width="1.6" fill="none"/><path d="M3.5 88L11 92L19 85" stroke="#000" stroke-width="1.3" fill="none"/><path d="M3.5 84.5V88" stroke="#000" stroke-width="1" fill="none"/><g shape-rendering="crispEdges"><rect x="23" y="74" width="166" height="1" fill="#808080"/><rect x="23" y="74" width="1" height="20" fill="#808080"/><rect x="24" y="75" width="164" height="1" fill="#000"/><rect x="24" y="75" width="1" height="18" fill="#000"/><rect x="25" y="76" width="163" height="17" fill="#fff"/><rect x="24" y="93" width="164" height="1" fill="#d4d0c8"/><rect x="23" y="94" width="166" height="1" fill="#fff"/><rect x="188" y="74" width="1" height="21" fill="#fff"/><rect x="172" y="76" width="16" height="17" fill="#d4d0c8"/><rect x="172" y="76" width="15" height="1" fill="#fff"/><rect x="172" y="76" width="1" height="16" fill="#fff"/><rect x="172" y="92" width="16" height="1" fill="#404040"/><rect x="187" y="76" width="1" height="17" fill="#404040"/><rect x="173" y="91" width="14" height="1" fill="#808080"/><rect x="186" y="77" width="1" height="15" fill="#808080"/><path d="M176 82H183L179.5 86Z" fill="#000"/></g><text x="28" y="89" font-size="12" font-family="Liberation Sans" fill="#000" transform="translate(28 0) scale(0.85 1) translate(-28 0)">Transformer</text><g shape-rendering="crispEdges"><rect x="0" y="96" width="190" height="1" fill="#d4d0c8"/><rect x="0" y="97" width="188" height="2" fill="#555"/><rect x="0" y="97" width="2" height="592" fill="#555"/><rect x="2" y="99" width="170" height="589" fill="#dde6f7"/><rect x="88" y="504" width="84" height="100" fill="#b7c8fb"/><rect x="2" y="200" width="170" height="1" fill="#000"/><rect x="2" y="301" width="170" height="1" fill="#000"/><rect x="2" y="402" width="170" height="1" fill="#000"/><rect x="2" y="503" width="170" height="1" fill="#000"/><rect x="2" y="604" width="170" height="1" fill="#000"/><rect x="87" y="99" width="1" height="589" fill="#000"/><rect x="0" y="688" width="189" height="1" fill="#d4d0c8"/><rect x="0" y="689" width="189" height="1" fill="#fff"/><rect x="188" y="97" width="1" height="592" fill="#fff"/></g><g shape-rendering="crispEdges"><rect x="172" y="99" width="16" height="589" fill="#d4d0c8"/><rect x="172" y="99" width="16" height="16" fill="#d4d0c8"/><rect x="172" y="99" width="15" height="1" fill="#d4d0c8"/><rect x="173" y="100" width="14" height="1" fill="#fff"/><rect x="173" y="100" width="1" height="14" fill="#fff"/><rect x="172" y="114" width="16" height="1" fill="#404040"/><rect x="187" y="99" width="1" height="16" fill="#404040"/><rect x="173" y="113" width="14" height="1" fill="#808080"/><rect x="186" y="100" width="1" height="14" fill="#808080"/><path d="M176 109H183L179.5 105.5Z" fill="#000"/><rect x="172" y="115" width="16" height="540" fill="#d4d0c8"/><rect x="172" y="115" width="15" height="1" fill="#d4d0c8"/><rect x="173" y="116" width="14" height="1" fill="#fff"/><rect x="173" y="116" width="1" height="538" fill="#fff"/><rect x="172" y="654" width="16" height="1" fill="#404040"/><rect x="187" y="115" width="1" height="540" fill="#404040"/><rect x="173" y="653" width="14" height="1" fill="#808080"/><rect x="186" y="116" width="1" height="538" fill="#808080"/></g><defs><pattern id="dith" width="2" height="2" patternUnits="userSpaceOnUse"><rect width="2" height="2" fill="#d4d0c8"/><rect width="1" height="1" fill="#fff"/><rect x="1" y="1" width="1" height="1" fill="#fff"/></pattern></defs><rect x="172" y="655" width="16" height="17" fill="url(#dith)"/><g shape-rendering="crispEdges"><rect x="172" y="672" width="16" height="16" fill="#d4d0c8"/><rect x="172" y="672" width="15" height="1" fill="#d4d0c8"/><rect x="173" y="673" width="14" height="1" fill="#fff"/><rect x="173" y="673" width="1" height="14" fill="#fff"/><rect x="172" y="687" width="16" height="1" fill="#404040"/><rect x="187" y="672" width="1" height="16" fill="#404040"/><rect x="173" y="686" width="14" height="1" fill="#808080"/><rect x="186" y="673" width="1" height="14" fill="#808080"/><path d="M176 678H183L179.5 681.5Z" fill="#000"/></g><g fill="none" stroke="#000" stroke-width="1.2"><path d="M11 126.5H37.5"/><path d="M11 175.5H37.5"/><path d="M37.5 126.5A4.2 6.125 0 0 1 37.5 138.75A4.2 6.125 0 0 1 37.5 151.0A4.2 6.125 0 0 1 37.5 163.25A4.2 6.125 0 0 1 37.5 175.5"/><path d="M35 138.75H37.5M35 151H37.5M35 163.25H37.5" stroke-width="1.4"/><path d="M55 126.5H79"/><path d="M55 175.5H79"/><path d="M55 126.5A3.8 6.125 0 0 0 55 138.75A3.8 6.125 0 0 0 55 151.0A3.8 6.125 0 0 0 55 163.25A3.8 6.125 0 0 0 55 175.5"/><path d="M55 138.75H57.8M55 151H57.8M55 163.25H57.8" stroke-width="1.4"/><path d="M96.5 112V134.5M139.5 112V134.5"/><path d="M96.5 134.5A5.375 5 0 0 0 107.25 134.5A5.375 5 0 0 0 118.0 134.5A5.375 5 0 0 0 128.75 134.5A5.375 5 0 0 0 139.5 134.5"/><path d="M96.5 172V152.5M139.5 172V152.5"/><path d="M96.5 152.5A5.375 5 0 0 1 107.25 152.5A5.375 5 0 0 1 118.0 152.5A5.375 5 0 0 1 128.75 152.5A5.375 5 0 0 1 139.5 152.5"/><path d="M11 227.5H38"/><path d="M11 276.5H38"/><path d="M38 227.5A4 6.125 0 0 1 38 239.75A4 6.125 0 0 1 38 252.0A4 6.125 0 0 1 38 264.25A4 6.125 0 0 1 38 276.5"/><path d="M35 239.75H38M35 252H38M35 264.25H38" stroke-width="1.4"/><path d="M53.5 227.5H79"/><path d="M53.5 276.5H79"/><path d="M53.5 227.5A4.2 6.125 0 0 0 53.5 239.75A4.2 6.125 0 0 0 53.5 252.0A4.2 6.125 0 0 0 53.5 264.25A4.2 6.125 0 0 0 53.5 276.5"/><path d="M53.5 239.75H57M53.5 252H57M53.5 264.25H57" stroke-width="1.4"/><path d="M45.5 228V275" stroke-dasharray="10,2" stroke-width="1"/><path d="M96.5 213V235M139.5 213V235"/><path d="M96.5 235A5.375 5 0 0 0 107.25 235A5.375 5 0 0 0 118.0 235A5.375 5 0 0 0 128.75 235A5.375 5 0 0 0 139.5 235"/><path d="M96.5 273V252.5M139.5 273V252.5"/><path d="M96.5 252.5A5.375 5 0 0 1 107.25 252.5A5.375 5 0 0 1 118.0 252.5A5.375 5 0 0 1 128.75 252.5A5.375 5 0 0 1 139.5 252.5"/><path d="M97 243.5H138" stroke-dasharray="10,1" stroke-width="1"/></g><g shape-rendering="crispEdges"><rect x="13" y="328" width="17" height="1" fill="#000"/><rect x="58" y="328" width="20" height="1" fill="#000"/><rect x="13" y="377" width="17" height="1" fill="#000"/><rect x="58" y="377" width="20" height="1" fill="#000"/><rect x="29" y="328" width="10" height="50" fill="#000"/><rect x="48" y="328" width="10" height="50" fill="#000"/><rect x="96" y="317" width="1" height="54" fill="#000"/><rect x="139" y="317" width="1" height="54" fill="#000"/><rect x="96" y="330" width="44" height="9" fill="#000"/><rect x="96" y="346" width="44" height="9" fill="#000"/><rect x="17" y="429" width="16" height="1" fill="#000"/><rect x="60" y="429" width="13" height="1" fill="#000"/><rect x="17" y="478" width="16" height="1" fill="#000"/><rect x="60" y="478" width="13" height="1" fill="#000"/><rect x="32" y="429" width="10" height="50" fill="#000"/><rect x="49" y="429" width="11" height="50" fill="#000"/></g><path d="M45.5 431V477" stroke="#000" stroke-dasharray="6,2" fill="none"/><g shape-rendering="crispEdges"><rect x="96" y="417" width="1" height="56" fill="#000"/><rect x="140" y="417" width="1" height="56" fill="#000"/><rect x="96" y="431" width="45" height="9" fill="#000"/><rect x="96" y="446" width="45" height="10" fill="#000"/></g><path d="M97 442.5H140" stroke="#000" stroke-dasharray="6,2" fill="none"/><circle cx="44.8" cy="541.4" r="17.2" fill="none" stroke="#000" stroke-width="1"/><circle cx="44.8" cy="562.6" r="17.2" fill="none" stroke="#000" stroke-width="1"/><g fill="none" stroke="#000" stroke-width="1.1"><path d="M115.5 511V517Q116 523 122 526V556Q116 560 115.5 563V570"/><ellipse cx="116" cy="530" rx="5.5" ry="2.8"/><ellipse cx="116" cy="540" rx="5.5" ry="2.8"/><ellipse cx="116" cy="549" rx="5.5" ry="2.8"/><path d="M144.5 511V517Q144 523 138 526V556Q144 560 144.5 563V570"/><ellipse cx="144" cy="530" rx="5.5" ry="2.8"/><ellipse cx="144" cy="540" rx="5.5" ry="2.8"/><ellipse cx="144" cy="549" rx="5.5" ry="2.8"/><path d="M127.5 511V569M130 511V569M132.5 511V569" stroke-dasharray="2.5,1.5" stroke-width="1"/></g><text x="119" y="579" font-size="5.5" font-family="Liberation Sans" fill="#000">Trafo old</text><g fill="none" stroke="#000" stroke-width="1"><path d="M14 627.5H28L36 630"/><path d="M14 681.5H28L36 679"/><path d="M36 630L25 631.8846153846154L36 633.7692307692307L25 635.6538461538462L36 637.5384615384615L25 639.4230769230769L36 641.3076923076923L25 643.1923076923077L36 645.0769230769231L25 646.9615384615385L36 648.8461538461538L25 650.7307692307693L36 652.6153846153846L25 654.5L36 656.3846153846154L25 658.2692307692307L36 660.1538461538462L25 662.0384615384615L36 663.9230769230769L25 665.8076923076923L36 667.6923076923077L25 669.5769230769231L36 671.4615384615385L25 673.3461538461538L36 675.2307692307693L25 677.1153846153846L36 679.0"/><path d="M76 627.5H62L53 630"/><path d="M76 681.5H62L53 679"/><path d="M53 630L65 631.8846153846154L53 633.7692307692307L65 635.6538461538462L53 637.5384615384615L65 639.4230769230769L53 641.3076923076923L65 643.1923076923077L53 645.0769230769231L65 646.9615384615385L53 648.8461538461538L65 650.7307692307693L53 652.6153846153846L65 654.5L53 656.3846153846154L65 658.2692307692307L53 660.1538461538462L65 662.0384615384615L53 663.9230769230769L65 665.8076923076923L53 667.6923076923077L65 669.5769230769231L53 671.4615384615385L65 673.3461538461538L53 675.2307692307693L65 677.1153846153846L53 679.0"/><path d="M40.5 627V682M45 627V682M46.5 627V682M49.5 627V682"/></g><text x="38.5" y="620.5" font-size="8.5" font-family="Liberation Sans" fill="#808080">Tr</text><g shape-rendering="crispEdges" fill="#fff" stroke="#000"><rect x="101.5" y="624.5" width="57" height="8" rx="2"/><rect x="101.5" y="661.5" width="57" height="8" rx="2"/><rect x="95.5" y="629.5" width="69" height="35"/></g><text x="103.5" y="652" font-size="13" font-family="Liberation Sans" fill="#000">Trafo</text><text x="33" y="119" font-size="12.5" font-family="Liberation Sans" fill="#222">Tr0</text><text x="147.5" y="144" font-size="11.5" font-family="Liberation Sans" fill="#222">Tr0</text><text x="33" y="220" font-size="12.5" font-family="Liberation Sans" fill="#222">Tr0</text><text x="147.5" y="244" font-size="11.5" font-family="Liberation Sans" fill="#222">Tr0</text><text x="32.5" y="321" font-size="12.5" font-family="Liberation Sans" fill="#222">Tr0</text><text x="147.5" y="344" font-size="11.5" font-family="Liberation Sans" fill="#222">Tr0</text><text x="36.3" y="422" font-size="12.5" font-family="Liberation Sans" fill="#222">Tr0</text><text x="146.5" y="442" font-size="11.5" font-family="Liberation Sans" fill="#222">Tr0</text><text x="36.3" y="519" font-size="8.5" font-family="Liberation Sans" fill="#333">Tr0</text><g shape-rendering="crispEdges" fill="#000"><rect x="5" y="699" width="7" height="2"/><rect x="7.5" y="696.5" width="2" height="7"/><rect x="20" y="699" width="6" height="2"/><rect x="31" y="695" width="20" height="10" fill="#000"/><rect x="32" y="696" width="18" height="8" fill="#a8c8f0"/><path d="M58.5 700.5L62 696.5L65.5 700.5H63.5V704H60.5V700.5Z"/><path d="M73.5 699.5L77 703.5L80.5 699.5H78.5V696H75.5V699.5Z"/></g><text x="33.5" y="703" font-size="8.5" font-family="Liberation Sans" fill="#000" textLength="14.5" lengthAdjust="spacingAndGlyphs" stroke="#000" stroke-width="0.35">Abcd</text></svg><svg class="a" style="left:0;top:0" width="226" height="709" viewBox="0 0 226 709"><defs><pattern id="grip" width="6" height="4" patternUnits="userSpaceOnUse" x="190" y="74"><rect x="0" y="2" width="1" height="1" fill="#fff"/><rect x="1" y="3" width="1" height="1" fill="#808080"/><rect x="3" y="0" width="1" height="1" fill="#fff"/><rect x="4" y="1" width="1" height="1" fill="#808080"/></pattern><pattern id="dith2" width="2" height="2" patternUnits="userSpaceOnUse"><rect width="2" height="2" fill="#d4d0c8"/><rect width="1" height="1" fill="#fff"/><rect x="1" y="1" width="1" height="1" fill="#fff"/></pattern></defs><rect x="190" y="74" width="6" height="634" fill="url(#grip)" shape-rendering="crispEdges"/><g shape-rendering="crispEdges"><rect x="197" y="74" width="27" height="26" fill="#808080"/><rect x="198" y="75" width="26" height="25" fill="#fff"/><rect x="198" y="75" width="25" height="24" fill="url(#dith2)"/></g><path d="M207.5 80.5V93.5L210.5 90.5L213 95.5L215 94.5L212.5 89.5H216.5Z" fill="#fff" stroke="#000" stroke-width="1" stroke-linejoin="miter"/><rect x="203.5" y="108.5" width="13" height="8" fill="none" stroke="#000" stroke-width="1.2"/><ellipse cx="210" cy="138.5" rx="6.5" ry="4.3" fill="none" stroke="#000" stroke-width="1.2"/><path d="M205 164.5L209 156.5L213 164.5Z" fill="none" stroke="#000" stroke-width="1.2"/><path d="M206 169Q208 166 210.5 168.5T216.5 170" fill="none" stroke="#000" stroke-width="1.2"/><path d="M208.5 185.5H216.5L211.5 190.5L216.5 195.5H204.5V189.5L208.5 185.5" fill="none" stroke="#0000a0"/><rect x="207.0" y="184.0" width="3" height="3" fill="#000"/><rect x="215.0" y="184.0" width="3" height="3" fill="#000"/><rect x="203.0" y="188.0" width="3" height="3" fill="#000"/><rect x="210.0" y="189.0" width="3" height="3" fill="#000"/><rect x="203.0" y="194.0" width="3" height="3" fill="#000"/><rect x="215.0" y="194.0" width="3" height="3" fill="#000"/><path d="M210.5 211.5L204.5 217.5V223.5H216.5" fill="none" stroke="#0000a0"/><rect x="209.0" y="210.0" width="3" height="3" fill="#000"/><rect x="203.0" y="216.0" width="3" height="3" fill="#000"/><rect x="203.0" y="222.0" width="3" height="3" fill="#000"/><rect x="215.0" y="222.0" width="3" height="3" fill="#000"/><path d="M202.5 236.5V249.5M217.5 238.5V250.5" fill="none" stroke="#0000ff" stroke-dasharray="1,1" shape-rendering="crispEdges"/><path d="M203 237L217 250" fill="none" stroke="#0000ff" stroke-dasharray="1.4,1.4"/><path d="M202.5 249.5C205 236 208 238 210 242S215 246 217.5 238.5" fill="none" stroke="#000" stroke-width="1.2"/><rect x="201" y="235" width="3" height="3" fill="#000"/><rect x="216" y="237" width="3" height="3" fill="#000"/><rect x="201.5" y="248.5" width="2" height="2" fill="#fff" stroke="#000"/><rect x="216" y="249" width="3" height="3" fill="#000"/><path d="M203.5 262V275M216.5 262V275M204 265.5H216" fill="none" stroke="#000" stroke-width="1" shape-rendering="crispEdges"/><path d="M204 265.5L207.5 262.5V268.5Z M216 265.5L212.5 262.5V268.5Z" fill="#000"/><path d="M223 274V281H216Z" fill="#808080"/><path d="M201 294.5H218M209.5 286V303" stroke="#000" stroke-width="1.2" fill="none"/><circle cx="209.5" cy="294.5" r="2.6" fill="#000"/><text x="202" y="326" font-size="12" font-weight="bold" font-family="Liberation Sans" fill="#000">ab</text><rect x="216" y="316" width="1" height="11" fill="#000"/><rect x="201.5" y="337.5" width="18" height="17" fill="none" stroke="#000" stroke-dasharray="1,1" shape-rendering="crispEdges"/><text x="203" y="351" font-size="12" font-weight="bold" font-family="Liberation Sans" fill="#000">ab</text><rect x="200.5" y="363.5" width="19" height="19" fill="#fff" stroke="#000"/><circle cx="214" cy="368.5" r="2.8" fill="#fff" stroke="#000"/><path d="M201 382L207.5 374.5L212 379L214.5 377L219 382Z" fill="#a0a0a0" stroke="#000" stroke-width="0.8"/><circle cx="207.5" cy="396.5" r="5" fill="#e8e8e8" stroke="#000" stroke-width="1.3"/><path d="M211 400L217 406" stroke="#000" stroke-width="2"/><rect x="201.5" y="420.5" width="17" height="9" fill="#fff" stroke="#000"/><path d="M204.5 426V429M207.5 427V429M210.5 426V429M213.5 427V429M216.5 426V429" stroke="#000" fill="none"/><rect x="224" y="74" width="1" height="617" fill="#808080" shape-rendering="crispEdges"/><rect x="225" y="75" width="1" height="615" fill="#fff" shape-rendering="crispEdges"/></svg><svg class="a" style="left:0;top:0" width="1366" height="700" viewBox="0 0 1366 700" font-family="Liberation Sans, sans-serif"><g shape-rendering="crispEdges" fill="#000"><rect x="276" y="94" width="1" height="2"/><rect x="304" y="94" width="1" height="2"/><rect x="332" y="94" width="1" height="2"/><rect x="360" y="94" width="1" height="2"/><rect x="388" y="91" width="1" height="5"/><rect x="416" y="94" width="1" height="2"/><rect x="444" y="94" width="1" height="2"/><rect x="471" y="94" width="1" height="2"/><rect x="499" y="94" width="1" height="2"/><rect x="527" y="91" width="1" height="5"/><rect x="555" y="94" width="1" height="2"/><rect x="583" y="94" width="1" height="2"/><rect x="611" y="94" width="1" height="2"/><rect x="639" y="94" width="1" height="2"/><rect x="667" y="91" width="1" height="5"/><rect x="695" y="94" width="1" height="2"/><rect x="723" y="94" width="1" height="2"/><rect x="751" y="94" width="1" height="2"/><rect x="779" y="94" width="1" height="2"/><rect x="807" y="91" width="1" height="5"/><rect x="835" y="94" width="1" height="2"/><rect x="863" y="94" width="1" height="2"/><rect x="891" y="94" width="1" height="2"/><rect x="918" y="94" width="1" height="2"/><rect x="946" y="91" width="1" height="5"/><rect x="974" y="94" width="1" height="2"/><rect x="1002" y="94" width="1" height="2"/><rect x="1030" y="94" width="1" height="2"/><rect x="1058" y="94" width="1" height="2"/><rect x="1086" y="91" width="1" height="5"/><rect x="1114" y="94" width="1" height="2"/><rect x="1142" y="94" width="1" height="2"/><rect x="1170" y="94" width="1" height="2"/><rect x="1198" y="94" width="1" height="2"/><rect x="1226" y="91" width="1" height="5"/><rect x="1254" y="94" width="1" height="2"/><rect x="1282" y="94" width="1" height="2"/><rect x="1310" y="94" width="1" height="2"/><rect x="1337" y="94" width="1" height="2"/><rect x="243" y="126" width="2" height="1"/><rect x="243" y="154" width="2" height="1"/><rect x="243" y="182" width="2" height="1"/><rect x="243" y="210" width="2" height="1"/><rect x="240" y="238" width="6" height="1"/><rect x="243" y="266" width="2" height="1"/><rect x="243" y="294" width="2" height="1"/><rect x="243" y="322" width="2" height="1"/><rect x="243" y="350" width="2" height="1"/><rect x="240" y="378" width="6" height="1"/><rect x="243" y="406" width="2" height="1"/><rect x="243" y="434" width="2" height="1"/><rect x="243" y="462" width="2" height="1"/><rect x="243" y="489" width="2" height="1"/><rect x="240" y="517" width="6" height="1"/><rect x="243" y="545" width="2" height="1"/><rect x="243" y="573" width="2" height="1"/><rect x="243" y="601" width="2" height="1"/><rect x="243" y="629" width="2" height="1"/><rect x="240" y="657" width="6" height="1"/><rect x="243" y="685" width="2" height="1"/></g><text x="389" y="88" font-size="13" text-anchor="middle" fill="#000">50</text><text x="528" y="88" font-size="13" text-anchor="middle" fill="#000">100</text><text x="668" y="88" font-size="13" text-anchor="middle" fill="#000">150</text><text x="808" y="88" font-size="13" text-anchor="middle" fill="#000">200</text><text x="947" y="88" font-size="13" text-anchor="middle" fill="#000">250</text><text x="1087" y="88" font-size="13" text-anchor="middle" fill="#000">300</text><text x="1227" y="88" font-size="13" text-anchor="middle" fill="#000">350</text><text x="1362" y="88" font-size="13" text-anchor="end" fill="#000">mm</text><text x="0" y="0" font-size="11.5" text-anchor="middle" fill="#000" transform="translate(236.7 238) rotate(-90)">50</text><text x="0" y="0" font-size="11.5" text-anchor="middle" fill="#000" transform="translate(236.7 378) rotate(-90)">100</text><text x="0" y="0" font-size="11.5" text-anchor="middle" fill="#000" transform="translate(236.7 517) rotate(-90)">150</text><text x="0" y="0" font-size="10.6" text-anchor="start" fill="#000" transform="translate(236.9 686.5) rotate(-90)">mm 200</text><g shape-rendering="crispEdges" fill="#808080"><rect x="229" y="81" width="1" height="1"/><rect x="231" y="81" width="1" height="1"/><rect x="233" y="81" width="1" height="1"/><rect x="235" y="81" width="1" height="1"/><rect x="237" y="81" width="1" height="1"/><rect x="239" y="81" width="1" height="1"/><rect x="241" y="81" width="1" height="1"/><rect x="231" y="79" width="1" height="1"/><rect x="231" y="81" width="1" height="1"/><rect x="231" y="83" width="1" height="1"/><rect x="231" y="85" width="1" height="1"/><rect x="231" y="87" width="1" height="1"/><rect x="231" y="89" width="1" height="1"/><rect x="231" y="91" width="1" height="1"/></g><path d="M233 83L238.5 88.5" stroke="#000" stroke-width="1.3"/><path d="M239.5 85V89.5H235Z" fill="#000"/></svg><svg class="a" style="left:0;top:0" width="1366" height="738" viewBox="0 0 1366 738" font-family="Liberation Sans, sans-serif"><defs><pattern id="dith3" width="2" height="2" patternUnits="userSpaceOnUse"><rect width="2" height="2" fill="#d4d0c8"/><rect width="1" height="1" fill="#fff"/><rect x="1" y="1" width="1" height="1" fill="#fff"/></pattern></defs><rect x="226" y="691" width="1140" height="18" fill="url(#dith3)" shape-rendering="crispEdges"/><rect x="226" y="690" width="1140" height="1" fill="#a0a0a0" shape-rendering="crispEdges"/><path d="M232.5 690.5L237.5 705.5H310.5L315.5 690.5" fill="#d4d0c8" stroke="#000" stroke-width="1"/><rect x="232" y="690" width="84" height="1" fill="#d4d0c8"/><text x="240" y="702" font-size="10.5" fill="#000">1: Neues Blatt</text><rect x="0" y="709" width="1366" height="29" fill="#d4d0c8"/><rect x="0" y="737" width="1366" height="1" fill="#000"/><g shape-rendering="crispEdges"><rect x="0" y="711" width="54" height="1" fill="#808080"/><rect x="0" y="711" width="1" height="26" fill="#808080"/><rect x="0" y="736" width="54" height="1" fill="#fff"/><rect x="53" y="711" width="1" height="26" fill="#fff"/><rect x="56" y="711" width="60" height="1" fill="#808080"/><rect x="56" y="711" width="1" height="26" fill="#808080"/><rect x="56" y="736" width="60" height="1" fill="#fff"/><rect x="115" y="711" width="1" height="26" fill="#fff"/><rect x="118" y="711" width="48" height="1" fill="#808080"/><rect x="118" y="711" width="1" height="26" fill="#808080"/><rect x="118" y="736" width="48" height="1" fill="#fff"/><rect x="165" y="711" width="1" height="26" fill="#fff"/><rect x="168" y="711" width="98" height="1" fill="#808080"/><rect x="168" y="711" width="1" height="26" fill="#808080"/><rect x="168" y="736" width="98" height="1" fill="#fff"/><rect x="265" y="711" width="1" height="26" fill="#fff"/><rect x="268" y="711" width="176" height="1" fill="#808080"/><rect x="268" y="711" width="1" height="26" fill="#808080"/><rect x="268" y="736" width="176" height="1" fill="#fff"/><rect x="443" y="711" width="1" height="26" fill="#fff"/><rect x="446" y="711" width="82" height="1" fill="#808080"/><rect x="446" y="711" width="1" height="26" fill="#808080"/><rect x="446" y="736" width="82" height="1" fill="#fff"/><rect x="527" y="711" width="1" height="26" fill="#fff"/><rect x="530" y="711" width="88" height="1" fill="#808080"/><rect x="530" y="711" width="1" height="26" fill="#808080"/><rect x="530" y="736" width="88" height="1" fill="#fff"/><rect x="617" y="711" width="1" height="26" fill="#fff"/><rect x="620" y="711" width="746" height="1" fill="#808080"/><rect x="620" y="711" width="1" height="26" fill="#808080"/><rect x="620" y="736" width="746" height="1" fill="#fff"/><rect x="1365" y="711" width="1" height="26" fill="#fff"/></g><text x="6" y="722" font-size="11" fill="#000" text-anchor="start">X: 189,0</text><text x="6" y="733.5" font-size="11" fill="#000" text-anchor="start">Y: 1,0</text><text x="142" y="722" font-size="11" fill="#000" text-anchor="middle">1:1</text><text x="141" y="733.5" font-size="11" fill="#000" text-anchor="middle">mm</text><text x="174" y="722" font-size="11" fill="#000" text-anchor="start">Grid:</text><text x="214" y="722" font-size="11" fill="#000" text-anchor="start">1 mm</text><text x="174" y="733.5" font-size="11" fill="#000" text-anchor="start">Zoom:</text><text x="214" y="733.5" font-size="11" fill="#000" text-anchor="start">0,93</text><text x="363" y="728" font-size="11" fill="#000" text-anchor="start">45°</text><text x="415" y="728" font-size="11" fill="#000" text-anchor="start">15°</text><text x="624" y="722" font-size="11" fill="#000" text-anchor="start">Edit: Select, move, rotate, delete elements ...</text><text x="624" y="733.5" font-size="11" fill="#000" text-anchor="start"><tspan letter-spacing="1.4">&lt;</tspan>Ctrl<tspan letter-spacing="1.4">&gt;</tspan> disables grid, <tspan letter-spacing="1.4">&lt;</tspan>Space<tspan letter-spacing="1.4">&gt;</tspan> = zoom</text><g shape-rendering="crispEdges" fill="#000"><rect x="275" y="716" width="1.3" height="15"/><rect x="280" y="716" width="1.3" height="15"/><rect x="285" y="716" width="1.3" height="15"/><rect x="273" y="718" width="15" height="1.3"/><rect x="273" y="723" width="15" height="1.3"/><rect x="273" y="728" width="15" height="1.3"/></g><path d="M300 721.5L302 719.5H305L310 724.5V727L308.5 728.5H306L300 724Z" fill="none" stroke="#000" stroke-width="2.4" transform="translate(0.8 0.8)"/><path d="M300 721.5L302 719.5H305L310 724.5V727L308.5 728.5H306L300 724Z" fill="none" stroke="#800000" stroke-width="2.4"/><g shape-rendering="crispEdges"><rect x="325" y="720" width="13" height="3" fill="#000"/><rect x="325" y="722" width="3" height="10" fill="#909090"/><rect x="323.5" y="718.5" width="6" height="6" fill="none" stroke="#f00" stroke-width="1"/></g><path d="M347.5 717V728.5H359" fill="none" stroke="#000" stroke-width="1"/><path d="M349 727L350 726M351 725L352 724M353 723L354 722M355 721L356 720" stroke="#000" stroke-width="1"/><path d="M406.5 720.2A4.3 4.3 0 1 0 408.8 725" fill="none" stroke="#000" stroke-width="1.4"/><path d="M405 719L410 720L407.5 723.5Z" fill="#000"/><rect x="451" y="723.6" width="44" height="1.2" fill="#000"/><rect x="503.7" y="717.7" width="18" height="13.4" fill="none" stroke="#000" stroke-width="1.3"/></svg></body></html>
